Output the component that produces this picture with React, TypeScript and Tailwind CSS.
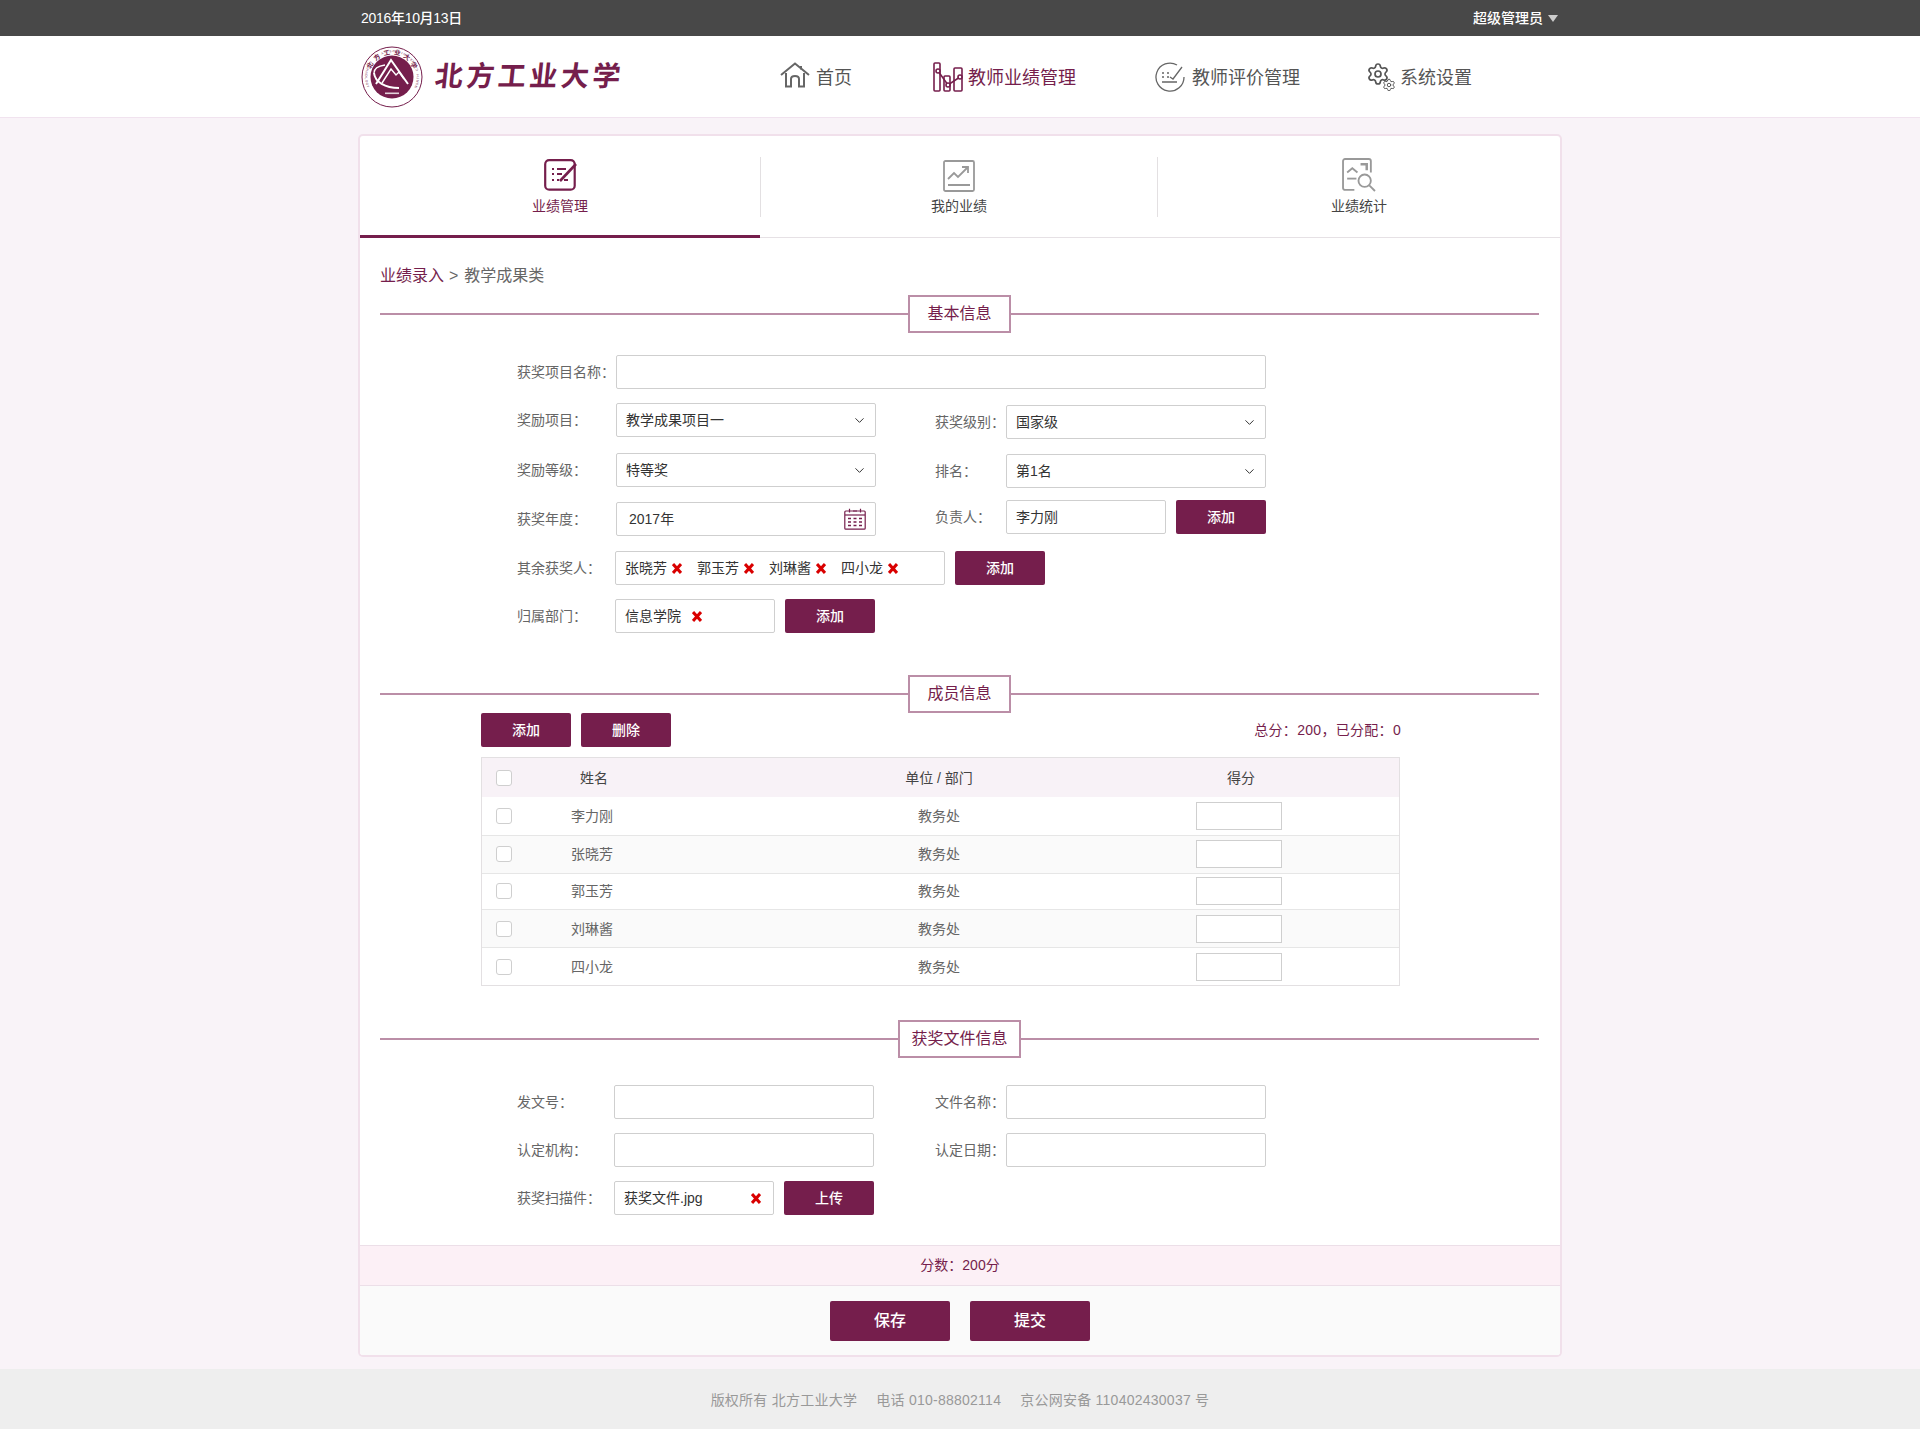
import React from 'react';
import { ChevronDown, Settings } from 'lucide-react';

const members = [
  { name: '李力刚', rowClass: 'h-[38px] pt-[5px] bg-white' },
  { name: '张晓芳', rowClass: 'h-[38px] pt-[4px] bg-[#fafafa]' },
  { name: '郭玉芳', rowClass: 'h-[36px] pt-[3px] bg-white' },
  { name: '刘琳酱', rowClass: 'h-[38px] pt-[5px] bg-[#fafafa]' },
  { name: '四小龙', rowClass: 'h-[38px] pt-[5px] bg-white' },
];

// letters set one by one round the seal
const ringLetters = (text: string, from: number, to: number, radius: number, bottom: boolean) =>
  Array.from(text).map((ch, i) => {
    const angle = from + ((to - from) * i) / (text.length - 1);
    const rad = (angle * Math.PI) / 180;
    const x = 31 + radius * Math.sin(rad);
    const y = 31 - radius * Math.cos(rad);
    return (
      <text
        key={i}
        x={x}
        y={y}
        textAnchor="middle"
        dominantBaseline="central"
        transform={`rotate(${bottom ? angle - 180 : angle} ${x} ${y})`}
      >
        {ch}
      </text>
    );
  });

const Emblem = () => (
  <svg width="62" height="62" viewBox="0 0 62 62" className="shrink-0">
    <circle cx="31" cy="31" r="30" fill="white" stroke="#751e4c" strokeWidth="1" />
    <circle cx="31" cy="31" r="21.5" fill="#751e4c" />
    <g fontSize="6.5" fill="#751e4c" fontWeight="700" fontFamily="'Noto Sans CJK SC', sans-serif">
      {ringLetters('北方工业大学', -62, 62, 25.5, false)}
    </g>
    <g fontSize="3.2" fill="#751e4c" fontFamily="'Liberation Sans', sans-serif">
      {ringLetters('NORTH CHINA UNIVERSITY OF TECHNOLOGY', 112, -112, 26, true)}
    </g>
    <path d="M15 38 L30 14 L47 38" fill="none" stroke="white" strokeWidth="2" />
    <path d="M21 37 L30 23 L35 29 L38 26 L43 33" fill="none" stroke="white" strokeWidth="1.4" />
    <path d="M13 27 C14 36 24 42 38 42" fill="none" stroke="white" strokeWidth="2" />
    <path d="M24 19 C17 20 13 23 13 27" fill="none" stroke="white" strokeWidth="1.3" />
    <rect x="24" y="46.5" width="14" height="1.6" fill="white" opacity="0.8" />
  </svg>
);

const HomeIcon = () => (
  <svg width="30" height="26" viewBox="0 0 30 26" fill="none" stroke="#666" strokeWidth="2">
    <path d="M1 13 L15 1.5 L29 13" />
    <path d="M21 4 V7.5" />
    <path d="M6 11 V24.5 H11 V17 C11 13 19 13 19 17 V24.5 H24 V11" />
  </svg>
);

const PerfIcon = () => (
  <svg width="30" height="30" viewBox="0 0 30 30" fill="none" stroke="#751e4c" strokeWidth="1.6">
    <path d="M1 2 a1 1 0 0 1 1-1 h4 a1 1 0 0 1 1 1 V28 a1 1 0 0 1-1 1 H2 a1 1 0 0 1-1-1 Z" />
    <path d="M11 15 a1 1 0 0 1 1-1 h4 a1 1 0 0 1 1 1 V28 a1 1 0 0 1-1 1 h-4 a1 1 0 0 1-1-1 Z" />
    <path d="M21 7 a1 1 0 0 1 1-1 h6 a1 1 0 0 1 1 1 V28 a1 1 0 0 1-1 1 h-6 a1 1 0 0 1-1-1 Z" />
    <path d="M5 9 L15 23 L27 15" />
    <circle cx="5" cy="9" r="2" fill="white" />
    <circle cx="15" cy="23" r="2" fill="white" />
    <circle cx="27" cy="15" r="2" fill="white" />
  </svg>
);

const EvalIcon = () => (
  <svg width="30" height="30" viewBox="0 0 30 30" fill="none" stroke="#666" strokeWidth="1.3">
    <path d="M22 3 A14 14 0 1 0 29 15" />
    <path d="M7 11 H9 M12 11 H14 M7 15 H9 M12 15 H14 M7 20 H22" strokeWidth="1.6" />
    <path d="M15 15 L18 17 L27 5" />
  </svg>
);

const SettingsIcon = () => (
  <svg width="28" height="28" viewBox="0 0 28 28">
    <Settings x={-1} y={-1} width={24} height={24} strokeWidth={1.7} color="#555" />
    <Settings x={15} y={15} width={14} height={14} strokeWidth={1.7} color="#555" />
  </svg>
);

const TabEditIcon = () => (
  <svg width="34" height="32" viewBox="0 0 34 32" fill="none" stroke="#751e4c" strokeWidth="2.2">
    <rect x="1.2" y="1.2" width="29.5" height="29.5" rx="4" />
    <path d="M8 10 H10 M13 10 H22 M8 15 H10 M13 15 H18 M8 21 H10 M13 21 H15 M20 21 H24" />
    <path d="M16 22 L32 5" strokeWidth="2.6" />
  </svg>
);

const TabChartIcon = () => (
  <svg width="32" height="32" viewBox="0 0 32 32" fill="none" stroke="#999" strokeWidth="1.8">
    <rect x="1" y="1" width="30" height="30" rx="1.5" />
    <path d="M5 19 L11 13 L15 17 L25 7" />
    <path d="M19 7 H25 V13" />
    <path d="M5 25 H27" strokeWidth="2" />
  </svg>
);

const TabStatIcon = () => (
  <svg width="34" height="34" viewBox="0 0 33 33" fill="none" stroke="#999" strokeWidth="1.8">
    <path d="M12 31 H3 a2 2 0 0 1-2-2 V3 a2 2 0 0 1 2-2 H26 a2 2 0 0 1 2 2 V14" />
    <path d="M5 14 L10 10 L15 14" />
    <path d="M5 20 H14" />
    <path d="M18 6 H24 V12" strokeWidth="2.4" />
    <circle cx="22" cy="22" r="6" />
    <path d="M26.5 26.5 L32 32" />
  </svg>
);

const CalendarIcon = () => (
  <svg width="22" height="22" viewBox="0 0 22 22" fill="none" stroke="#751e4c" strokeWidth="1.2">
    <rect x="0.8" y="3" width="20.4" height="18.2" rx="1" />
    <path d="M1 7 H21" />
    <path d="M5.5 0.8 V4.6 M16.5 0.8 V4.6 M9 3 H13" />
    <path d="M4 10.5 H7 M9.5 10.5 H12.5 M15 10.5 H18 M4 14 H7 M9.5 14 H12.5 M15 14 H18 M4 17.5 H7 M9.5 17.5 H12.5 M15 17.5 H18" strokeWidth="1.5" />
  </svg>
);

const RedX = () => (
  <svg width="10" height="11" viewBox="0 0 10 11" className="shrink-0" stroke="#d90000" strokeWidth="3">
    <path d="M1 1 L9 10 M9 1 L1 10" />
  </svg>
);

const Divider = ({ title, boxClass }: { title: string; boxClass: string }) => (
  <div className="flex items-center">
    <div className="h-[2px] flex-1 bg-[#bb8ea7]" />
    <div className={`${boxClass} flex h-[38px] items-center justify-center border-2 border-[#bb8ea7] bg-white text-base text-[#751e4c]`}>
      {title}
    </div>
    <div className="h-[2px] flex-1 bg-[#bb8ea7]" />
  </div>
);

const Btn = ({ children, className }: { children: React.ReactNode; className: string }) => (
  <button className={`${className} shrink-0 rounded-[2px] bg-[#751e4c] font-medium text-white`}>{children}</button>
);

const fieldClass = 'flex h-[34px] items-center rounded-[2px] border border-[#cfcfcf] bg-white text-sm text-[#333]';

const Label = ({ children, className }: { children: React.ReactNode; className: string }) => (
  <div className={`${className} flex h-[34px] shrink-0 items-center text-sm text-[#666]`}>{children}</div>
);

const SelectBox = ({ value }: { value: string }) => (
  <div className={`${fieldClass} w-[260px] justify-between pr-[8px] pl-[9px]`}>
    <span>{value}</span>
    <ChevronDown size={15} strokeWidth={1.6} color="#333" />
  </div>
);

const Check = () => <div className="h-[16px] w-[16px] rounded-[3px] border border-[#cfcfcf] bg-white" />;

export default function App() {
  return (
    <div className="flex min-h-screen flex-col bg-[#f9f3f8] font-['Liberation_Sans','Noto_Sans_CJK_SC',sans-serif]">
      <div className="h-[36px] bg-[#484848]">
        <div className="mx-auto flex h-full w-[1200px] items-center justify-between pr-[2px] pl-[1px] text-sm font-medium text-white">
          <span className="tracking-[-0.3px]">2016年10月13日</span>
          <div className="flex items-center gap-[5px]">
            <span>超级管理员</span>
            <span className="h-0 w-0 border-x-[5px] border-t-[7px] border-x-transparent border-t-[#ccc]" />
          </div>
        </div>
      </div>

      <div className="h-[82px] border-b border-[#f1e3ef] bg-white">
        <div className="mx-auto flex h-full w-[1200px] items-center">
          <div className="ml-[1px] flex w-[419px] items-center gap-[12px]">
            <Emblem />
            <span className="origin-left -skew-x-6 text-[28px] font-bold tracking-[3.5px] text-[#751e4c]">北方工业大学</span>
          </div>
          <div className="flex items-center gap-[6px] text-lg text-[#555]">
            <div className="mb-[3px]"><HomeIcon /></div>
            <span className="pt-[2px]">首页</span>
          </div>
          <div className="ml-[81px] flex items-center gap-[5px] text-lg text-[#751e4c]">
            <PerfIcon />
            <span className="pt-[2px]">教师业绩管理</span>
          </div>
          <div className="ml-[79px] flex items-center gap-[7px] text-lg text-[#555]">
            <EvalIcon />
            <span className="pt-[2px]">教师评价管理</span>
          </div>
          <div className="ml-[67px] flex items-center gap-[5px] text-lg text-[#555]">
            <SettingsIcon />
            <span className="pt-[2px]">系统设置</span>
          </div>
        </div>
      </div>

      <div className="mx-auto mt-[18px] w-[1200px] rounded-[3px] bg-white shadow-[0_0_0_2px_#f1e0eb]">
        <div className="flex h-[102px] border-b border-[#e6e1e5]">
          <div className="flex h-[102px] w-[400px] flex-col items-center border-b-[3px] border-[#751e4c] pt-[23px] pl-[2px]">
            <div className="h-[32px]"><TabEditIcon /></div>
            <span className="mt-[5px] mr-[2px] text-sm text-[#751e4c]">业绩管理</span>
          </div>
          <div className="relative flex w-[398px] flex-col items-center pt-[24px]">
            <div className="absolute top-[21px] left-0 h-[60px] w-px bg-[#e3e0e2]" />
            <div className="h-[32px]"><TabChartIcon /></div>
            <span className="mt-[4px] text-sm text-[#444]">我的业绩</span>
            <div className="absolute top-[21px] right-0 h-[60px] w-px bg-[#e3e0e2]" />
          </div>
          <div className="flex flex-1 flex-col items-center pt-[22px]">
            <div className="h-[33px]"><TabStatIcon /></div>
            <span className="mt-[5px] text-sm text-[#444]">业绩统计</span>
          </div>
        </div>

        <div className="pr-[21px] pl-[20px]">
          <div className="mt-[26px] h-[24px] text-base leading-[24px] text-[#666]">
            <span className="text-[#751e4c]">业绩录入</span>
            <span className="pr-[6px] pl-[5px]">&gt;</span>教学成果类
          </div>
          <div className="mt-[7px]">
            <Divider title="基本信息" boxClass="w-[103px]" />
          </div>

          <div className="pl-[137px]">
            <div className="mt-[22px] flex h-[34px]">
              <Label className="w-[99px]">获奖项目名称：</Label>
              <input className={`${fieldClass} w-[650px]`} />
            </div>

            <div className="mt-[14px] flex h-[36px]">
              <Label className="w-[99px]">奖励项目：</Label>
              <SelectBox value="教学成果项目一" />
              <div className="mt-[2px] ml-[59px] flex">
                <Label className="w-[71px]">获奖级别：</Label>
                <SelectBox value="国家级" />
              </div>
            </div>

            <div className="mt-[14px] flex h-[35px]">
              <Label className="w-[99px]">奖励等级：</Label>
              <SelectBox value="特等奖" />
              <div className="mt-[1px] ml-[59px] flex">
                <Label className="w-[71px]">排名：</Label>
                <SelectBox value="第1名" />
              </div>
            </div>

            <div className="mt-[12px] flex h-[36px]">
              <div className="mt-[2px] flex">
                <Label className="w-[99px]">获奖年度：</Label>
                <div className={`${fieldClass} w-[260px] justify-between pr-[9px] pl-[12px]`}>
                  <span>2017年</span>
                  <CalendarIcon />
                </div>
              </div>
              <div className="ml-[59px] flex">
                <Label className="w-[71px]">负责人：</Label>
                <div className={`${fieldClass} w-[160px] pl-[9px]`}>李力刚</div>
                <Btn className="ml-[10px] h-[34px] w-[90px] text-sm">添加</Btn>
              </div>
            </div>

            <div className="mt-[15px] flex h-[34px]">
              <Label className="w-[98px]">其余获奖人：</Label>
              <div className={`${fieldClass} w-[330px] gap-[15px] pl-[9px]`}>
                {['张晓芳', '郭玉芳', '刘琳酱', '四小龙'].map((n) => (
                  <span key={n} className="flex items-center gap-[5px]">
                    {n}
                    <RedX />
                  </span>
                ))}
              </div>
              <Btn className="ml-[10px] h-[34px] w-[90px] text-sm">添加</Btn>
            </div>

            <div className="mt-[14px] flex h-[34px]">
              <Label className="w-[98px]">归属部门：</Label>
              <div className={`${fieldClass} w-[160px] gap-[11px] pl-[9px]`}>
                信息学院
                <RedX />
              </div>
              <Btn className="ml-[10px] h-[34px] w-[90px] text-sm">添加</Btn>
            </div>
          </div>

          <div className="mt-[42px]">
            <Divider title="成员信息" boxClass="w-[103px]" />
          </div>

          <div className="ml-[101px] w-[920px]">
            <div className="flex h-[34px] items-center">
              <Btn className="h-[34px] w-[90px] text-sm">添加</Btn>
              <Btn className="ml-[10px] h-[34px] w-[90px] text-sm">删除</Btn>
              <span className="ml-auto text-sm tracking-[0.3px] text-[#751e4c]">总分：200，已分配：0</span>
            </div>

            <div className="mt-[10px] w-[919px] border border-[#e3e0e2] text-sm text-[#666]">
              <div className="flex h-[39px] items-center bg-[#f8f2f7] text-[#444]">
                <div className="mt-[1px] w-[60px] pl-[14px]"><Check /></div>
                <div className="w-[104px] text-center">姓名</div>
                <div className="w-[454px] pl-[132px] text-center">单位 / 部门</div>
                <div className="ml-[96px] w-[90px] text-center">得分</div>
              </div>
              {members.map((m, i) => (
                <div key={m.name} className={`${m.rowClass} flex items-start ${i > 0 ? 'border-t border-[#e6e6e6]' : ''}`}>
                  <div className="flex h-[28px] w-[60px] items-center pl-[14px]"><Check /></div>
                  <div className="flex h-[28px] w-[100px] items-center justify-center">{m.name}</div>
                  <div className="flex h-[28px] w-[458px] items-center justify-center pl-[136px]">教务处</div>
                  <input className="ml-[96px] h-[28px] w-[86px] border border-[#cfcfcf] bg-white" />
                </div>
              ))}
            </div>
          </div>

          <div className="mt-[34px]">
            <Divider title="获奖文件信息" boxClass="w-[123px]" />
          </div>

          <div className="pl-[137px]">
            <div className="mt-[27px] flex h-[34px]">
              <Label className="w-[97px]">发文号：</Label>
              <input className={`${fieldClass} w-[260px]`} />
              <Label className="ml-[61px] w-[71px]">文件名称：</Label>
              <input className={`${fieldClass} w-[260px]`} />
            </div>
            <div className="mt-[14px] flex h-[34px]">
              <Label className="w-[97px]">认定机构：</Label>
              <input className={`${fieldClass} w-[260px]`} />
              <Label className="ml-[61px] w-[71px]">认定日期：</Label>
              <input className={`${fieldClass} w-[260px]`} />
            </div>
            <div className="mt-[14px] flex h-[34px]">
              <Label className="w-[97px]">获奖扫描件：</Label>
              <div className={`${fieldClass} w-[160px] justify-between pr-[12px] pl-[9px]`}>
                <span>获奖文件.jpg</span>
                <RedX />
              </div>
              <Btn className="ml-[10px] h-[34px] w-[90px] text-sm">上传</Btn>
            </div>
          </div>
        </div>

        <div className="mt-[30px] flex h-[41px] items-center justify-center border-y border-[#ecdfe8] bg-[#fcf0f6] pb-[2px] text-sm text-[#751e4c]">
          分数：200分
        </div>
        <div className="flex h-[69px] items-start justify-center gap-[20px] rounded-b-[3px] bg-[#fafafa] pt-[15px]">
          <Btn className="h-[40px] w-[120px] text-base">保存</Btn>
          <Btn className="h-[40px] w-[120px] text-base">提交</Btn>
        </div>
      </div>

      <div className="mt-[14px] flex h-[60px] items-center justify-center gap-[19px] bg-[#eeeeee] pt-[2px] text-sm tracking-[0.25px] text-[#999]">
        <span>版权所有 北方工业大学</span>
        <span>电话 010-88802114</span>
        <span>京公网安备 110402430037 号</span>
      </div>
    </div>
  );
}
